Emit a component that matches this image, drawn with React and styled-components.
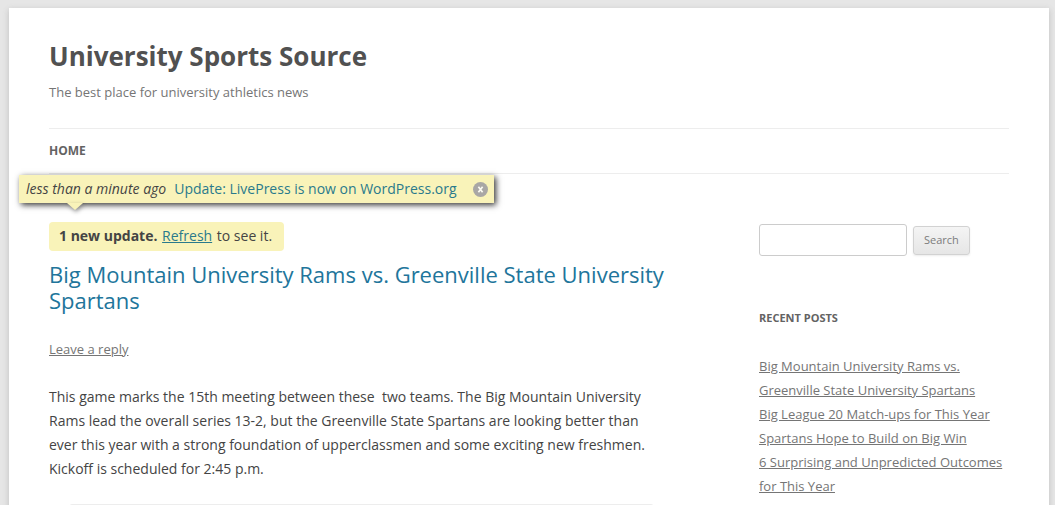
import React from "react";
import styled, { createGlobalStyle } from "styled-components";

const Global = createGlobalStyle`
  *, *::before, *::after { box-sizing: border-box; }
  html { scrollbar-width: none; }
  body {
    margin: 0;
    background: #e6e6e6;
    color: #444;
    font: 14px/24px "Open Sans", Helvetica, Arial, sans-serif;
  }
  h1, h2, h3, p, ul { margin: 0; padding: 0; font-weight: inherit; }
`;

const Page = styled.div`
  max-width: 1040px;
  min-height: 100vh;
  margin: 0 6px 0 9px;
  padding: 31px 40px 0;
  background: #fff;
  box-shadow: 0 2px 6px rgba(100, 100, 100, 0.3);
`;

const Backdrop = styled.div`
  padding-top: 8px;
`;

const SiteTitle = styled.h1`
  font-size: 26px;
  line-height: 34px;
  font-weight: 700;
  color: #515151;
`;

const Tagline = styled.p`
  margin-top: 7px;
  font-size: 13px;
  color: #757575;
`;

const Nav = styled.nav`
  display: flex;
  margin-top: 24px;
  padding: 10px 0;
  border-top: 1px solid #ededed;
  border-bottom: 1px solid #ededed;
`;

const NavLink = styled.a`
  font-size: 12px;
  font-weight: 700;
  color: #636363;
  text-decoration: none;
  text-transform: uppercase;
`;

const Columns = styled.div`
  position: relative;
  display: grid;
  grid-template-columns: minmax(0, 5fr) minmax(0, 2fr);
  column-gap: 85px;
  padding-top: 48px;
`;

const Toast = styled.aside`
  position: absolute;
  top: 1px;
  left: -30px;
  display: flex;
  align-items: center;
  height: 28px;
  padding: 0 6px 0 7px;
  background: #f9f3b9;
  box-shadow: 2px 2px 6px rgba(0, 0, 0, 0.8);
  white-space: nowrap;
`;

const ToastTail = styled.svg`
  position: absolute;
  top: 28px;
  left: 48px;
  overflow: visible;
  filter: drop-shadow(1px 2px 2px rgba(0, 0, 0, 0.4));
`;

const ToastLink = styled.a`
  margin-left: 8px;
  color: #2a7a8c;
  text-decoration: none;
`;

const CloseButton = styled.button`
  display: flex;
  margin-left: 16px;
  padding: 0;
  border: 0;
  background: none;
`;

const UpdateBar = styled.p`
  width: max-content;
  padding: 2px 12px 3px 10px;
  border-radius: 4px;
  background: #f9f3b9;

  a { margin-left: 1px; margin-right: 1px; color: #2a7a8c; }
`;

const PostTitle = styled.h2`
  margin-top: 10px;
  font-size: 22px;
  line-height: 26px;

  a { color: #21759b; text-decoration: none; }
`;

const ReplyLink = styled.a`
  display: block;
  width: max-content;
  margin-top: 24px;
  font-size: 13px;
  color: #757575;
`;

const PostBody = styled.p`
  margin-top: 24px;
  padding-right: 8px;
  white-space: pre-wrap;
`;

const Embed = styled.div`
  height: 80px;
  margin: 23px 20px 0;
  border: 1px solid #ededed;
  border-radius: 3px;
`;

const SearchForm = styled.form`
  display: flex;
  align-items: center;
  gap: 6px;
  margin-top: 2px;
`;

const SearchInput = styled.input`
  width: 148px;
  height: 32px;
  padding: 6px;
  border: 1px solid #ccc;
  border-radius: 3px;
  font: inherit;
`;

const SearchButton = styled.button`
  height: 29px;
  padding: 0 10px;
  border: 1px solid #d2d2d2;
  border-radius: 3px;
  background: linear-gradient(#f4f4f4, #e6e6e6);
  box-shadow: 0 1px 2px rgba(64, 64, 64, 0.1);
  color: #7c7c7c;
  font: 11px/16px "Open Sans", Helvetica, Arial, sans-serif;
`;

const WidgetTitle = styled.h3`
  margin-top: 50px;
  font-size: 11px;
  font-weight: 700;
  color: #636363;
  text-transform: uppercase;
`;

const PostList = styled.ul`
  margin-top: 24px;
  list-style: none;
  font-size: 13px;

  a { color: #757575; }
`;

const recentPosts = [
  "Big Mountain University Rams vs. Greenville State University Spartans",
  "Big League 20 Match-ups for This Year",
  "Spartans Hope to Build on Big Win",
  "6 Surprising and Unpredicted Outcomes for This Year",
];

export default function App() {
  return (
    <Backdrop>
      <Global />
      <Page>
        <header>
          <SiteTitle>University Sports Source</SiteTitle>
          <Tagline>The best place for university athletics news</Tagline>
          <Nav><NavLink href="#">Home</NavLink></Nav>
        </header>
        <Columns>
          <Toast>
            <em>less than a minute ago</em>
            <ToastLink href="#">Update: LivePress is now on WordPress.org</ToastLink>
            <CloseButton type="button" aria-label="Close">
              <svg width="15" height="15" viewBox="0 0 15 15">
                <circle cx="7.5" cy="7.5" r="7.5" fill="#a9a7a5" />
                <path d="M5.4 4.8L9.6 10.2M9.6 4.8L5.4 10.2" stroke="#fbfaf2" strokeWidth="1.7" />
              </svg>
            </CloseButton>
            <ToastTail width="16" height="7" viewBox="0 0 16 7">
              <path d="M0 0H16L8 7Z" fill="#f9f3b9" />
            </ToastTail>
          </Toast>
          <main>
            <UpdateBar>
              <strong>1 new update.</strong> <a href="#">Refresh</a> to see it.
            </UpdateBar>
            <article>
              <PostTitle>
                <a href="#">Big Mountain University Rams vs. Greenville State University Spartans</a>
              </PostTitle>
              <ReplyLink href="#">Leave a reply</ReplyLink>
              <PostBody>
                {"This game marks the 15th meeting between these  two teams. The Big Mountain University Rams lead the overall series 13-2, but the Greenville State Spartans are looking better than ever this year with a strong foundation of upperclassmen and some exciting new freshmen. Kickoff is scheduled for 2:45 p.m."}
              </PostBody>
              <Embed />
            </article>
          </main>
          <aside>
            <SearchForm role="search">
              <SearchInput type="text" aria-label="Search for" />
              <SearchButton type="button">Search</SearchButton>
            </SearchForm>
            <WidgetTitle>Recent Posts</WidgetTitle>
            <PostList>
              {recentPosts.map((title) => (
                <li key={title}><a href="#">{title}</a></li>
              ))}
            </PostList>
          </aside>
        </Columns>
      </Page>
    </Backdrop>
  );
}
